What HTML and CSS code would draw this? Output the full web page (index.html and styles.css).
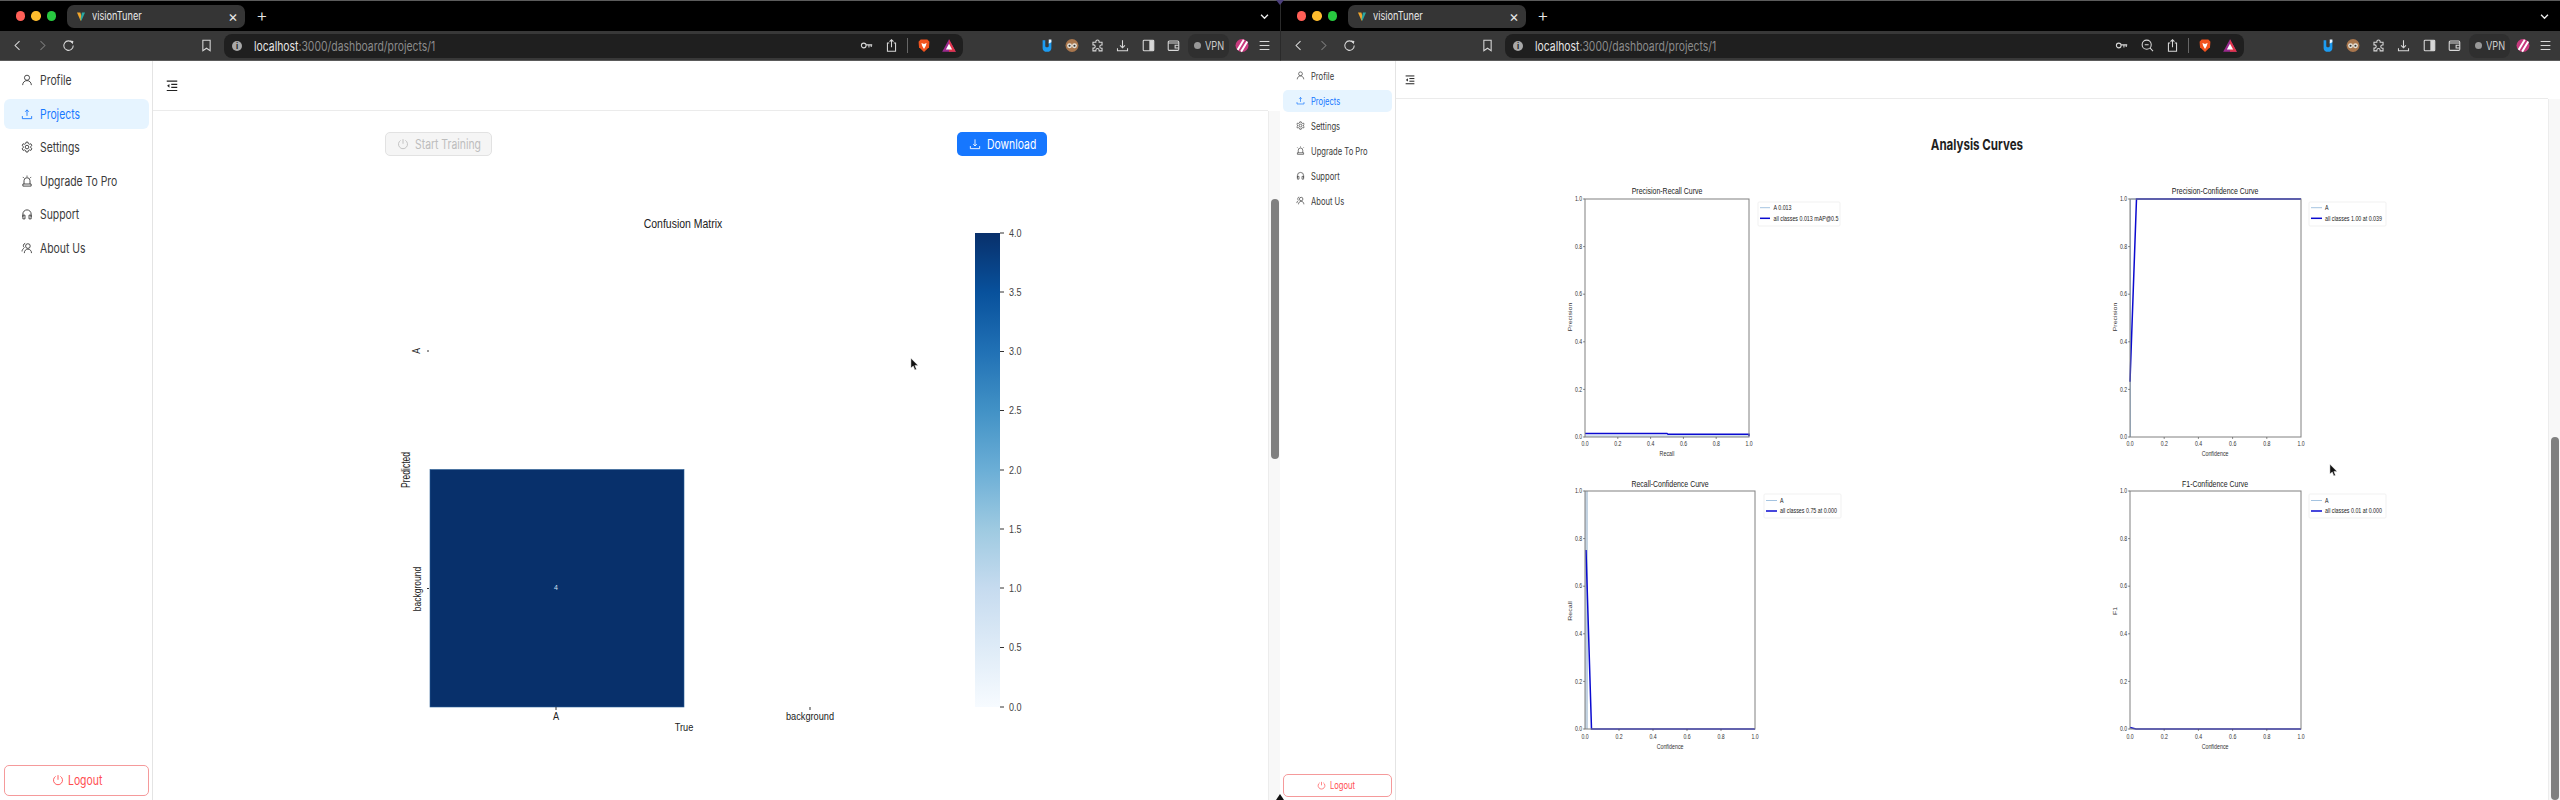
FILE: index.html
```html
<!DOCTYPE html>
<html lang="en">
<head>
  <meta charset="UTF-8" />
  <title>visionTuner</title>
  <link rel="stylesheet" href="styles.css">
</head>
<body>
  <!-- shared icons -->
  <svg class="sprite" aria-hidden="true">
    <defs>
      <symbol id="i-user" viewBox="0 0 16 16"><circle cx="8" cy="5" r="3.4"/><path d="M2.2 14.8c0-3.6 2.6-6 5.8-6s5.8 2.4 5.8 6"/></symbol>
      <symbol id="i-upload" viewBox="0 0 16 16"><path d="M8 10.5V2.5M5.6 5L8 2.5 10.4 5M1.8 10.8v3.4h12.4v-3.4"/></symbol>
      <symbol id="i-download" viewBox="0 0 16 16"><path d="M8 1.8v8.8M5.6 8.2L8 10.6l2.4-2.4M1.8 10.8v3.4h12.4v-3.4"/></symbol>
      <symbol id="i-gear" viewBox="0 0 16 16"><path d="M6.7 1.5h2.6l.4 1.9 1.6.9 1.9-.6 1.3 2.2-1.5 1.3v1.8l1.5 1.3-1.3 2.2-1.9-.6-1.6.9-.4 1.9H6.7l-.4-1.9-1.6-.9-1.9.6-1.3-2.2 1.5-1.3V7.2L1.5 5.9l1.3-2.2 1.9.6 1.6-.9z"/><circle cx="8" cy="8.1" r="2.4"/></symbol>
      <symbol id="i-alert" viewBox="0 0 16 16"><path d="M4 12V7.6a4 4 0 0 1 8 0V12M2.5 12h11v2.8h-11zM8 .8v1.6M2.4 2.6l1.2 1.2M13.6 2.6l-1.2 1.2"/></symbol>
      <symbol id="i-phones" viewBox="0 0 16 16"><path d="M2.5 12V8a5.5 5.5 0 0 1 11 0v4M2.5 9.5h2.8v5H2.5zM10.7 9.5h2.8v5h-2.8z"/></symbol>
      <symbol id="i-team" viewBox="0 0 16 16"><circle cx="9.2" cy="5.4" r="3.1"/><path d="M4.4 14.8c0-3.2 2.1-5.3 4.8-5.3s4.8 2.1 4.8 5.3M5.6 1.8a3.2 3.2 0 0 0-1 5.8M1.4 12.6c0-2 1-3.5 2.6-4.2"/></symbol>
      <symbol id="i-menu" viewBox="0 0 16 16"><path d="M1 1.500h14M7 5.700h8M7 9.900h8M1 14h14"/><path class="solid" d="M4.600 5.200L1.400 7.800l3.200 2.600z"/></symbol>
      <symbol id="i-power" viewBox="0 0 16 16"><path d="M8 1.5v6.2M4.8 3.2a6 6 0 1 0 6.4 0"/></symbol>

      <symbol id="c-back" viewBox="0 0 16 16"><path d="M10.5 2.5L5 8l5.5 5.5"/></symbol>
      <symbol id="c-forward" viewBox="0 0 16 16"><path d="M5.5 2.5L11 8l-5.5 5.5"/></symbol>
      <symbol id="c-reload" viewBox="0 0 16 16"><path d="M12.6 4.6A5.8 5.8 0 1 0 13.8 8"/><path class="solid" d="M9.8 1.8l4.2 .6-.8 4.2z"/></symbol>
      <symbol id="c-bookmark" viewBox="0 0 16 16"><path d="M3.5 1.5h9v13L8 11.4l-4.5 3.1z"/></symbol>
      <symbol id="c-key" viewBox="0 0 16 16"><circle cx="4.6" cy="8" r="2.9"/><path d="M7.5 7.2H15M11 7.2v3.2M13.8 7.2v2.6" /></symbol>
      <symbol id="c-zoom" viewBox="0 0 16 16"><circle cx="7" cy="7" r="5.6"/><path d="M4.6 7h4.8M11 11l3.8 3.8"/></symbol>
      <symbol id="c-share" viewBox="0 0 16 16"><path d="M5.2 5H3v10h10V5h-2.2M8 10V1M5.6 3.2L8 1l2.4 2.2"/></symbol>
      <symbol id="c-puzzle" viewBox="0 0 16 16"><path d="M6 3.2a2 2 0 0 1 4 0V4h3.6v3.4h-.8a2 2 0 0 0 0 4h.8v3.2H10v-.8a2 2 0 0 0-4 0v.8H2.4v-3.4h.8a2 2 0 0 0 0-4h-.8V4H6z"/></symbol>
      <symbol id="c-save" viewBox="0 0 16 16"><path d="M8 1.5v9M5 7.8l3 3 3-3M1.8 11.5v3h12.4v-3"/></symbol>
      <symbol id="c-panel" viewBox="0 0 16 16"><rect x="1.5" y="1.5" width="13" height="13" rx="1"/><path class="solid" d="M9 1.5h5.5v13H9z"/></symbol>
      <symbol id="c-wallet" viewBox="0 0 16 16"><rect x="1.5" y="2.5" width="13" height="11.5" rx="1.5"/><path d="M1.5 5h13M14.5 7.8H10v3.2h4.5"/></symbol>
      <symbol id="c-lines" viewBox="0 0 16 16"><path d="M2 3h12M2 8h12M2 13h12"/></symbol>

      <symbol id="b-favicon" viewBox="0 0 16 16"><path fill="#f0a52c" d="M1.5 1.5h5.5l2.5 9-2 4.5z"/><path fill="#2aa7a0" d="M9.5 1.5h5l-6 13.5-1.2-3z"/></symbol>
      <symbol id="b-brave" viewBox="0 0 16 16"><path fill="#f1531f" d="M4.2 1h7.6l2.4 2.6-.5 6.4L8 15.5 2.3 10l-.5-6.4z"/><path fill="#fff" d="M5 5.2l3 1 3-1-1 3.4L8 12 6 8.6z"/></symbol>
      <symbol id="b-rewards" viewBox="0 0 16 16"><path fill="#9b2a8e" d="M8 .8L15.8 15H.2z"/><path fill="#e0364b" d="M8 .8L15.8 15H8z"/><path fill="#fff" d="M8 6l3.6 6.6H4.4z"/></symbol>
      <symbol id="b-hand" viewBox="0 0 16 16"><path fill="#1d9bf0" d="M3 2h3v6.5c0 1 .8 1.6 2 1.6s2-.6 2-1.6V4l3-2v9c0 2.6-2.2 4.2-5 4.2S3 13.6 3 11z"/><path fill="#e8f4ff" d="M10 1h3v3.4l-3 1.2z"/></symbol>
      <symbol id="b-owl" viewBox="0 0 16 16"><circle cx="8" cy="8" r="7.4" fill="#a8764d"/><circle cx="5.2" cy="8.2" r="2.8" fill="#e9e4da"/><circle cx="10.8" cy="8.2" r="2.8" fill="#e9e4da"/><circle cx="5.2" cy="8.2" r="1.2" fill="#333"/><circle cx="10.8" cy="8.2" r="1.2" fill="#333"/></symbol>
      <symbol id="b-stripes" viewBox="0 0 16 16"><circle cx="8" cy="8" r="7.4" fill="#c73a7e"/><path stroke="#fff" stroke-width="2.2" d="M3 13L10 1.5M7 15L14 3.5"/></symbol>
    </defs>
  </svg>

  <div class="desktop">
    <!-- left window: confusion matrix -->
    <section class="window">
      <div class="tabbar">
        <span class="light red"></span><span class="light amber"></span><span class="light green"></span>
        <div class="tab">
          <svg class="favicon"><use href="#b-favicon"/></svg>
          <span class="sq">visionTuner</span>
          <span class="tab-close">×</span>
        </div>
        <span class="tab-new">+</span>
        <svg class="tab-more" viewBox="0 0 16 16"><path d="M3 5.5l5 5 5-5"/></svg>
      </div>
      <div class="toolbar">
        <button class="tb"><svg><use href="#c-back"/></svg></button>
        <button class="tb dim"><svg><use href="#c-forward"/></svg></button>
        <button class="tb"><svg><use href="#c-reload"/></svg></button>
        <button class="tb bookmark"><svg><use href="#c-bookmark"/></svg></button>
        <div class="urlbar">
          <span class="info">i</span>
          <span class="sq url"><b>localhost</b>:3000/dashboard/projects/1</span>
          <button class="tb push"><svg><use href="#c-key"/></svg></button>
          <button class="tb"><svg><use href="#c-share"/></svg></button>
          <span class="sep"></span>
          <button class="tb"><svg class="brand"><use href="#b-brave"/></svg></button>
          <button class="tb"><svg class="brand"><use href="#b-rewards"/></svg></button>
        </div>
        <div class="extensions">
          <button class="tb"><svg class="brand"><use href="#b-hand"/></svg></button>
          <button class="tb"><svg class="brand"><use href="#b-owl"/></svg></button>
          <button class="tb"><svg><use href="#c-puzzle"/></svg></button>
          <button class="tb"><svg><use href="#c-save"/></svg></button>
          <button class="tb"><svg><use href="#c-panel"/></svg></button>
          <button class="tb"><svg><use href="#c-wallet"/></svg></button>
          <span class="vpn"><i></i><span class="sq">VPN</span></span>
          <button class="tb"><svg class="brand"><use href="#b-stripes"/></svg></button>
          <button class="tb last"><svg><use href="#c-lines"/></svg></button>
        </div>
      </div>

      <div class="app">
        <aside class="sidebar">
          <nav class="nav">
            <a class="nav-item"><svg class="icon"><use href="#i-user"/></svg><span class="sq">Profile</span></a>
            <a class="nav-item active"><svg class="icon"><use href="#i-upload"/></svg><span class="sq">Projects</span></a>
            <a class="nav-item"><svg class="icon"><use href="#i-gear"/></svg><span class="sq">Settings</span></a>
            <a class="nav-item"><svg class="icon"><use href="#i-alert"/></svg><span class="sq">Upgrade To Pro</span></a>
            <a class="nav-item"><svg class="icon"><use href="#i-phones"/></svg><span class="sq">Support</span></a>
            <a class="nav-item"><svg class="icon"><use href="#i-team"/></svg><span class="sq">About Us</span></a>
          </nav>
          <button class="logout"><svg class="icon"><use href="#i-power"/></svg><span class="sq">Logout</span></button>
        </aside>
        <main class="main">
          <header class="topbar"><svg class="icon"><use href="#i-menu"/></svg></header>
          <div class="content">
            <div class="actions">
              <button class="btn disabled"><svg class="icon"><use href="#i-power"/></svg><span class="sq">Start Training</span></button>
              <button class="btn primary"><svg class="icon"><use href="#i-download"/></svg><span class="sq">Download</span></button>
            </div>
            <svg class="matrix" viewBox="385 190 680 550">
              <defs>
                <linearGradient id="blues" x1="0" y1="1" x2="0" y2="0">
                  <stop offset="0" stop-color="#f7fbff"/>
                  <stop offset=".125" stop-color="#deebf7"/>
                  <stop offset=".25" stop-color="#c6dbef"/>
                  <stop offset=".375" stop-color="#9ecae1"/>
                  <stop offset=".5" stop-color="#6baed6"/>
                  <stop offset=".625" stop-color="#4292c6"/>
                  <stop offset=".75" stop-color="#2171b5"/>
                  <stop offset=".875" stop-color="#08519c"/>
                  <stop offset="1" stop-color="#08306b"/>
                </linearGradient>
              </defs>
              <text class="cm-title" x="683" y="228">Confusion Matrix</text>
              <rect x="430" y="469.5" width="254" height="237.5" fill="#08306b" stroke="#2a5f96" stroke-width=".6"/>
              <text class="cm-cell" x="556" y="590">4</text>
              <path class="cm-tick" d="M427 351h2M427 588.5h2M556 707v3M810 707v3"/>
              <text class="cm-label" x="556" y="720">A</text>
              <text class="cm-label" x="810" y="720">background</text>
              <text class="cm-label" x="684" y="731">True</text>
              <text class="cm-side" transform="translate(420 351) rotate(-90) scale(1 1.3)">A</text>
              <text class="cm-side" transform="translate(421 589) rotate(-90) scale(1 1.3)">background</text>
              <text class="cm-side" transform="translate(409.500 470) rotate(-90) scale(1 1.4)">Predicted</text>
              <rect x="975" y="233" width="25" height="474" fill="url(#blues)"/>
              <path class="cm-tick" d="M1000 233h4M1000 292h4M1000 351.500h4M1000 410.500h4M1000 470h4M1000 529h4M1000 588h4M1000 647.500h4M1000 707h4"/>
              <g class="cm-scale">
                <text x="1009" y="237">4.0</text>
                <text x="1009" y="296">3.5</text>
                <text x="1009" y="355.500">3.0</text>
                <text x="1009" y="414.500">2.5</text>
                <text x="1009" y="474">2.0</text>
                <text x="1009" y="533">1.5</text>
                <text x="1009" y="592">1.0</text>
                <text x="1009" y="651.500">0.5</text>
                <text x="1009" y="711">0.0</text>
              </g>
            </svg>
          </div>
        </main>
        <div class="scrollbar"><div class="thumb"></div></div>
      </div>
    </section>

    <!-- right window: analysis curves, browser zoomed out -->
    <section class="window compact">
      <div class="tabbar">
        <span class="light red"></span><span class="light amber"></span><span class="light green"></span>
        <div class="tab">
          <svg class="favicon"><use href="#b-favicon"/></svg>
          <span class="sq">visionTuner</span>
          <span class="tab-close">×</span>
        </div>
        <span class="tab-new">+</span>
        <svg class="tab-more" viewBox="0 0 16 16"><path d="M3 5.5l5 5 5-5"/></svg>
      </div>
      <div class="toolbar">
        <button class="tb"><svg><use href="#c-back"/></svg></button>
        <button class="tb dim"><svg><use href="#c-forward"/></svg></button>
        <button class="tb"><svg><use href="#c-reload"/></svg></button>
        <button class="tb bookmark"><svg><use href="#c-bookmark"/></svg></button>
        <div class="urlbar">
          <span class="info">i</span>
          <span class="sq url"><b>localhost</b>:3000/dashboard/projects/1</span>
          <button class="tb push"><svg><use href="#c-key"/></svg></button>
          <button class="tb"><svg><use href="#c-zoom"/></svg></button>
          <button class="tb"><svg><use href="#c-share"/></svg></button>
          <span class="sep"></span>
          <button class="tb"><svg class="brand"><use href="#b-brave"/></svg></button>
          <button class="tb"><svg class="brand"><use href="#b-rewards"/></svg></button>
        </div>
        <div class="extensions">
          <button class="tb"><svg class="brand"><use href="#b-hand"/></svg></button>
          <button class="tb"><svg class="brand"><use href="#b-owl"/></svg></button>
          <button class="tb"><svg><use href="#c-puzzle"/></svg></button>
          <button class="tb"><svg><use href="#c-save"/></svg></button>
          <button class="tb"><svg><use href="#c-panel"/></svg></button>
          <button class="tb"><svg><use href="#c-wallet"/></svg></button>
          <span class="vpn"><i></i><span class="sq">VPN</span></span>
          <button class="tb"><svg class="brand"><use href="#b-stripes"/></svg></button>
          <button class="tb last"><svg><use href="#c-lines"/></svg></button>
        </div>
      </div>

      <div class="app">
        <aside class="sidebar">
          <nav class="nav">
            <a class="nav-item"><svg class="icon"><use href="#i-user"/></svg><span class="sq">Profile</span></a>
            <a class="nav-item active"><svg class="icon"><use href="#i-upload"/></svg><span class="sq">Projects</span></a>
            <a class="nav-item"><svg class="icon"><use href="#i-gear"/></svg><span class="sq">Settings</span></a>
            <a class="nav-item"><svg class="icon"><use href="#i-alert"/></svg><span class="sq">Upgrade To Pro</span></a>
            <a class="nav-item"><svg class="icon"><use href="#i-phones"/></svg><span class="sq">Support</span></a>
            <a class="nav-item"><svg class="icon"><use href="#i-team"/></svg><span class="sq">About Us</span></a>
          </nav>
          <button class="logout"><svg class="icon"><use href="#i-power"/></svg><span class="sq">Logout</span></button>
        </aside>
        <main class="main">
          <header class="topbar"><svg class="icon"><use href="#i-menu"/></svg></header>
          <div class="content">
            <h2 class="curves-title"><span>Analysis Curves</span></h2>
            <div class="curves">

              <svg class="curve" viewBox="1540 175 340 292">
                <text class="c-title" x="1666" y="194.500">Precision-Recall Curve</text>
                <path class="c-a" d="M1584 436h164"/>
                <path class="c-all" d="M1584 433.500h82l1 .8h81v2"/>
                <rect class="c-frame" x="1584" y="199" width="164" height="238"/>
                <path class="c-tick" d="M1582 199h2M1582 246.600h2M1582 294.200h2M1582 341.800h2M1582 389.400h2M1582 437h2M1616.800 437v2M1649.600 437v2M1682.400 437v2M1715.200 437v2"/>
                <g class="c-yt">
                  <text x="1581" y="201.300">1.0</text><text x="1581" y="248.900">0.8</text><text x="1581" y="296.500">0.6</text>
                  <text x="1581" y="344.100">0.4</text><text x="1581" y="391.700">0.2</text><text x="1581" y="439.300">0.0</text>
                </g>
                <g class="c-xt">
                  <text x="1584" y="446">0.0</text><text x="1616.800" y="446">0.2</text><text x="1649.600" y="446">0.4</text>
                  <text x="1682.400" y="446">0.6</text><text x="1715.200" y="446">0.8</text><text x="1748" y="446">1.0</text>
                </g>
                <text class="c-xl" x="1666" y="456.500">Recall</text>
                <text class="c-yl" transform="translate(1571 317) rotate(-90) scale(1 .85)">Precision</text>
                <rect class="c-legend" x="1757" y="202" width="82" height="24" rx="1"/>
                <path class="c-a" d="M1759 207.700h10"/><path class="c-all" d="M1759 218.300h10"/>
                <text class="c-lt" x="1772.500" y="210">A 0.013</text>
                <text class="c-lt" x="1772.500" y="220.600">all classes 0.013 mAP@0.5</text>
              </svg>

              <svg class="curve" viewBox="2090 175 340 292">
                <text class="c-title" x="2214" y="194.500">Precision-Confidence Curve</text>
                <path class="c-a" d="M2129.500 437V199H2300"/>
                <path class="c-all" d="M2129 381.700L2135.500 199H2300"/>
                <rect class="c-frame" x="2129" y="199" width="171" height="238"/>
                <path class="c-tick" d="M2127 199h2M2127 246.600h2M2127 294.200h2M2127 341.800h2M2127 389.400h2M2127 437h2M2163.200 437v2M2197.400 437v2M2231.600 437v2M2265.800 437v2"/>
                <g class="c-yt">
                  <text x="2126" y="201.300">1.0</text><text x="2126" y="248.900">0.8</text><text x="2126" y="296.500">0.6</text>
                  <text x="2126" y="344.100">0.4</text><text x="2126" y="391.700">0.2</text><text x="2126" y="439.300">0.0</text>
                </g>
                <g class="c-xt">
                  <text x="2129" y="446">0.0</text><text x="2163.200" y="446">0.2</text><text x="2197.400" y="446">0.4</text>
                  <text x="2231.600" y="446">0.6</text><text x="2265.800" y="446">0.8</text><text x="2300" y="446">1.0</text>
                </g>
                <text class="c-xl" x="2214" y="456.500">Confidence</text>
                <text class="c-yl" transform="translate(2116 317) rotate(-90) scale(1 .85)">Precision</text>
                <rect class="c-legend" x="2308" y="202" width="77" height="24" rx="1"/>
                <path class="c-a" d="M2310 207.700h11"/><path class="c-all" d="M2310 218.300h11"/>
                <text class="c-lt" x="2324" y="210">A</text>
                <text class="c-lt" x="2324" y="220.600">all classes 1.00 at 0.039</text>
              </svg>

              <svg class="curve" viewBox="1540 467 340 292">
                <text class="c-title" x="1669" y="487">Recall-Confidence Curve</text>
                <path class="c-band" d="M1585.500 491V729"/>
                <path class="c-all" d="M1585 550L1590.500 729H1754"/>
                <rect class="c-frame" x="1584" y="491" width="170" height="238"/>
                <path class="c-tick" d="M1582 491h2M1582 538.600h2M1582 586.200h2M1582 633.800h2M1582 681.400h2M1582 729h2M1618 729v2M1652 729v2M1686 729v2M1720 729v2"/>
                <g class="c-yt">
                  <text x="1581" y="493.300">1.0</text><text x="1581" y="540.900">0.8</text><text x="1581" y="588.500">0.6</text>
                  <text x="1581" y="636.100">0.4</text><text x="1581" y="683.700">0.2</text><text x="1581" y="731.300">0.0</text>
                </g>
                <g class="c-xt">
                  <text x="1584" y="739.300">0.0</text><text x="1618" y="739.300">0.2</text><text x="1652" y="739.300">0.4</text>
                  <text x="1686" y="739.300">0.6</text><text x="1720" y="739.300">0.8</text><text x="1754" y="739.300">1.0</text>
                </g>
                <text class="c-xl" x="1669" y="749">Confidence</text>
                <text class="c-yl" transform="translate(1571 611) rotate(-90) scale(1 .85)">Recall</text>
                <rect class="c-legend" x="1763" y="494" width="77" height="24" rx="1"/>
                <path class="c-a" d="M1765 500.500h11"/><path class="c-all" d="M1765 511h11"/>
                <text class="c-lt" x="1779" y="502.800">A</text>
                <text class="c-lt" x="1779" y="513.300">all classes 0.75 at 0.000</text>
              </svg>

              <svg class="curve" viewBox="2090 467 340 292">
                <text class="c-title" x="2214" y="487">F1-Confidence Curve</text>
                <path class="c-all" d="M2129 727.500L2135 729H2300"/>
                <rect class="c-frame" x="2129" y="491" width="171" height="238"/>
                <path class="c-tick" d="M2127 491h2M2127 538.600h2M2127 586.200h2M2127 633.800h2M2127 681.400h2M2127 729h2M2163.200 729v2M2197.400 729v2M2231.600 729v2M2265.800 729v2"/>
                <g class="c-yt">
                  <text x="2126" y="493.300">1.0</text><text x="2126" y="540.900">0.8</text><text x="2126" y="588.500">0.6</text>
                  <text x="2126" y="636.100">0.4</text><text x="2126" y="683.700">0.2</text><text x="2126" y="731.300">0.0</text>
                </g>
                <g class="c-xt">
                  <text x="2129" y="739.300">0.0</text><text x="2163.200" y="739.300">0.2</text><text x="2197.400" y="739.300">0.4</text>
                  <text x="2231.600" y="739.300">0.6</text><text x="2265.800" y="739.300">0.8</text><text x="2300" y="739.300">1.0</text>
                </g>
                <text class="c-xl" x="2214" y="749">Confidence</text>
                <text class="c-yl" transform="translate(2116 611) rotate(-90) scale(1 .85)">F1</text>
                <rect class="c-legend" x="2308" y="494" width="77" height="24" rx="1"/>
                <path class="c-a" d="M2310 500.500h11"/><path class="c-all" d="M2310 511h11"/>
                <text class="c-lt" x="2324" y="502.800">A</text>
                <text class="c-lt" x="2324" y="513.300">all classes 0.01 at 0.000</text>
              </svg>

            </div>
          </div>
        </main>
        <div class="scrollbar"><div class="thumb"></div></div>
      </div>
    </section>
  </div>

  <!-- things lying over the windows: mouse pointers, dock marker -->
  <svg class="pointer pointer-left" viewBox="0 0 10 14"><path d="M1 0v11l2.6-2.4L5.400 13l1.800-.8L5.400 8H9z"/></svg>
  <svg class="pointer pointer-right" viewBox="0 0 10 14"><path d="M1 0v11l2.6-2.4L5.400 13l1.800-.8L5.400 8H9z"/></svg>
  <span class="corner-mark top"></span>
  <span class="corner-mark bottom"></span>
</body>
</html>
```

FILE: styles.css
```css
* { box-sizing: border-box; }
html, body { margin: 0; height: 800px; overflow: hidden; background: #fff; }
body { position: relative; font-family: Inter, "Liberation Sans", sans-serif; font-size: 13px; color: #333; }
button { font: inherit; padding: 0; border: 0; background: none; color: inherit; }
.sprite { width: 0; height: 0; position: absolute; }
.sq { display: inline-block; white-space: nowrap; transform: scaleX(.8); transform-origin: left center; }
.solid { fill: currentColor; stroke: none; }
.icon { fill: none; stroke: currentColor; stroke-width: 1.2; flex: none; width: 12px; height: 12px; }

.desktop { display: flex; height: 800px; }
.window { width: 1280px; height: 800px; display: flex; flex-direction: column; flex: none; }
.compact .tabbar, .compact .toolbar { border-left: 1px solid #2a2a2a; }

/* browser frame */
.tabbar { height: 31px; flex: none; background: #000; border-top: 1px solid #5c5c5c; display: flex; align-items: center; padding-left: 15.500px; padding-right: 10px; color: #e6e6e6; }
.light { width: 9.500px; height: 9.500px; border-radius: 50%; margin-right: 6px; flex: none; }
.light.red { background: #ff5f57; }
.light.amber { background: #febc2e; }
.light.green { background: #28c840; }
.tab { width: 178px; height: 23px; margin-left: 5px; background: #353535; border-radius: 7px; display: flex; align-items: center; padding: 0 7px 0 9px; font-size: 11.500px; }
.favicon { width: 10px; height: 11px; margin-right: 6px; flex: none; }
.tab-close { margin-left: auto; font-size: 15px; line-height: 1; }
.tab-new { margin-left: 11px; font-size: 18px; font-weight: 300; line-height: 1; }
.tab-more { width: 11px; height: 11px; margin-left: auto; fill: none; stroke: #eee; stroke-width: 2; }

.toolbar { height: 30px; flex: none; background: #383838; border-bottom: 1px solid #5a5a5a; display: flex; align-items: center; padding-left: 5px; color: #d8d8d8; }
.tb { width: 25.300px; height: 26px; flex: none; display: flex; align-items: center; justify-content: center; }
.tb svg { width: 13px; height: 13px; fill: none; stroke: currentColor; stroke-width: 1.300; }
.tb svg.brand { width: 14px; height: 15px; stroke: none; }
.tb.dim { color: #777; }
.tb.bookmark { margin-left: 113px; margin-right: 5px; }
.urlbar { width: 738.500px; height: 24px; background: #1f1f1f; border-radius: 8px; display: flex; align-items: center; padding: 0 1px 0 8px; flex: none; }
.info { width: 10px; height: 10px; border-radius: 50%; background: #a8a8a8; color: #222; font-size: 8px; font-weight: 700; line-height: 10px; text-align: center; flex: none; margin-right: 11.500px; }
.url { color: #8c8c8c; font-size: 13px; }
.url b { color: #e8e8e8; font-weight: 400; }
.push { margin-left: auto; }
.sep { width: 1px; height: 15px; background: #666; margin: 0 3px; flex: none; }
.extensions { display: flex; align-items: center; margin-left: 71.500px; }
.vpn { width: 41px; height: 24px; margin-left: 2px; background: #2f2f2f; border-radius: 8px; display: flex; align-items: center; padding-left: 6px; font-size: 11.500px; color: #ccc; flex: none; }
.vpn i { width: 7px; height: 7px; border-radius: 50%; background: #999; margin-right: 4px; flex: none; }
.tb.last { width: 21px; }

/* app shell */
.app { flex: 1; min-height: 0; display: flex; background: #fff; }
.sidebar { width: 153px; flex: none; border-right: 1px solid #e4e4e4; display: flex; flex-direction: column; padding: 4px 3.500px 4.300px; }
.nav { display: flex; flex-direction: column; gap: 3.500px; }
.nav-item { height: 30px; display: flex; align-items: center; gap: 7.500px; padding-left: 17px; border-radius: 6px; color: #3a3a3a; }
.nav-item.active { background: #e6f4ff; color: #1677ff; }
.logout { margin-top: auto; height: 31px; border: 1px solid #f59a9b; border-radius: 5px; color: #ff4d4f; display: flex; align-items: center; gap: 4.500px; padding-left: 47px; }

.main { flex: 1; min-width: 0; overflow: hidden; }
.topbar { height: 50px; border-bottom: 1px solid #ebebeb; display: flex; align-items: center; padding-left: 13px; color: #222; }
.topbar .icon { width: 12px; height: 12px; stroke-width: 1.600; }
.content { padding-left: 232px; }
.actions { width: 662px; margin-top: 21px; margin-bottom: 34px; display: flex; justify-content: space-between; }
.btn { height: 24px; border-radius: 5px; display: flex; align-items: center; gap: 6px; }
.btn.disabled { width: 107px; padding-left: 11px; background: #f5f5f5; border: 1px solid #e2e2e2; color: #bdbdbd; }
.btn.primary { width: 90px; padding-left: 12px; background: #1677ff; color: #fff; }
.matrix { display: block; width: 680px; height: 550px; }

.scrollbar { width: 12px; flex: none; background: #f8f8f8; border-left: 1px solid #ececec; margin-top: 50px; padding-left: 2px; }
.thumb { width: 8px; height: 260px; margin-top: 88px; background: #808080; border-radius: 4px; }

/* confusion matrix */
.matrix text { font-family: "Liberation Sans", sans-serif; }
.cm-title { font-size: 12.500px; fill: #222; text-anchor: middle; transform-box: fill-box; transform-origin: center; transform: scaleX(.84); }
.cm-cell { font-size: 7px; fill: #cfe0f2; text-anchor: middle; }
.cm-tick { stroke: #333; stroke-width: 1; fill: none; }
.cm-label { font-size: 11.500px; fill: #222; text-anchor: middle; transform-box: fill-box; transform-origin: center; transform: scaleX(.8); }
.cm-side { font-size: 8.500px; fill: #222; text-anchor: middle; }
.cm-scale text { font-size: 11px; fill: #444; transform-box: fill-box; transform-origin: left center; transform: scaleX(.82); }

/* curve charts */
.curve text { font-family: "Liberation Sans", sans-serif; }
.c-title { font-size: 8.800px; fill: #222; text-anchor: middle; transform-box: fill-box; transform-origin: center; transform: scaleX(.79); }
.c-frame { fill: none; stroke: #808080; stroke-width: 1; }
.c-tick { stroke: #444; stroke-width: .6; fill: none; }
.c-a { stroke: #8db4d8; stroke-width: .8; fill: none; }
.c-band { stroke: #c3d3e2; stroke-width: 3; fill: none; }
.c-all { stroke: #0a0ad0; stroke-width: 1.500; fill: none; }
.c-yt text { font-size: 7px; fill: #333; text-anchor: end; transform-box: fill-box; transform-origin: right center; transform: scaleX(.74); }
.c-xt text { font-size: 7px; fill: #333; text-anchor: middle; transform-box: fill-box; transform-origin: center; transform: scaleX(.74); }
.c-xl { font-size: 7px; fill: #333; text-anchor: middle; transform-box: fill-box; transform-origin: center; transform: scaleX(.76); }
.c-yl { font-size: 7px; fill: #333; text-anchor: middle; }
.c-legend { fill: #fff; stroke: #eeeeee; stroke-width: .8; }
.c-lt { font-size: 7px; fill: #222; transform-box: fill-box; transform-origin: left center; transform: scaleX(.76); }

/* right window is the same app at a smaller browser zoom */
.compact .sidebar { width: 115.500px; padding: 3.600px 2.500px 3.300px 3px; }
.compact .nav { gap: 2.300px; }
.compact .nav-item { height: 22.700px; font-size: 10px; gap: 5.500px; padding-left: 13px; border-radius: 5px; }
.compact .icon { width: 9px; height: 9px; }
.compact .nav-item .sq { transform: scaleX(.76); }
.compact .logout { height: 23px; font-size: 10px; gap: 4px; padding-left: 33px; }
.compact .logout .sq { transform: scaleX(.76); }
.compact .topbar { height: 38px; padding-left: 9px; }
.compact .topbar .icon { width: 10px; height: 10px; stroke-width: 1.600; }
.compact .content { padding-left: 0; }
.compact .scrollbar { margin-top: 38px; }
.compact .thumb { height: 363px; margin-top: 338px; }
.curves-title { margin: 36px 0 20px; padding-left: 11px; text-align: center; font-size: 15px; line-height: 20px; font-weight: 700; color: #1f1f1f; }
.curves-title span { display: inline-block; transform: scaleX(.77); }
.curves { display: grid; grid-template-columns: 340px 340px; column-gap: 210px; margin-left: 145px; }
.curve { display: block; width: 340px; height: 292px; }

/* overlays */
.pointer { position: absolute; width: 9px; height: 13px; fill: #111; stroke: #fff; stroke-width: .5; }
.pointer-left { left: 910px; top: 358px; }
.pointer-right { left: 2329px; top: 464px; }
.corner-mark { position: absolute; left: 1276px; width: 8px; height: 5px; }
.corner-mark.top { top: 0; background: #4b3f7a; clip-path: polygon(0 0, 100% 0, 50% 100%); }
.corner-mark.bottom { top: 794px; height: 6px; background: #111; clip-path: polygon(50% 0, 100% 100%, 0 100%); }
```
